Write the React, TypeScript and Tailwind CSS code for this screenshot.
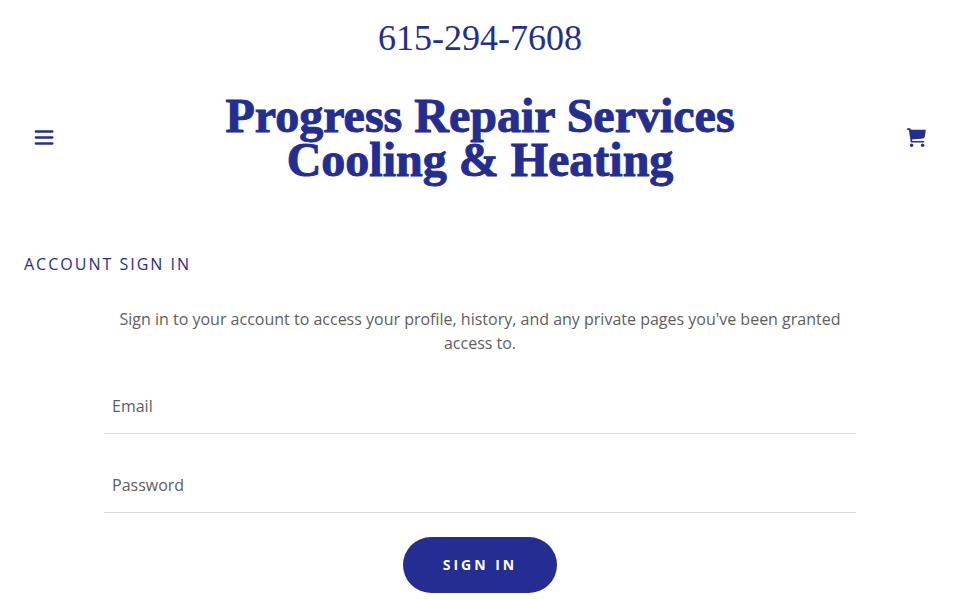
import { useState } from 'react';
import type { FormEvent } from 'react';

const fieldClass =
  'block w-full h-[55px] px-2 border-b border-[#d9d9d9] bg-transparent text-base text-[#5e5e5e] placeholder:text-[#5e5e5e] placeholder:opacity-100 focus:outline-none focus:border-[#242d92]';

function MenuIcon() {
  return (
    <svg
      className="w-6 h-6"
      viewBox="0 0 24 24"
      fill="none"
      stroke="currentColor"
      strokeWidth={2.3}
      strokeLinecap="round"
      aria-hidden="true"
    >
      <path d="M3.8 5.5h16.6M3.8 11.5h16.6M3.8 17.5h16.6" />
    </svg>
  );
}

function CartIcon() {
  return (
    <svg className="w-6 h-6" viewBox="0 0 24 24" fill="currentColor" aria-hidden="true">
      <path d="M3.7 2.2h2c.5 0 .8.3.9.8l.2.8h14c.6 0 1 .5.9 1.1l-.9 5.6c-.2 1-.8 1.7-1.8 1.9L8 13.4l.3 1.5h11.3c.5 0 .8.4.8.8s-.3.9-.8.9H7.6c-.4 0-.8-.3-.9-.7L4.900 3.900H3.700c-.5 0-.8-.4-.8-.9s.3-.8.8-.8z" />
      <circle cx="7.6" cy="19.300" r="1.700" />
      <circle cx="18.600" cy="19.300" r="1.700" />
    </svg>
  );
}

function Header() {
  return (
    <header className="px-6 pt-4 font-['Liberation_Serif',serif]">
      <p className="text-center text-4xl leading-[44px]">
        <a href="tel:615-294-7608">615-294-7608</a>
      </p>
      <div className="mt-[34px] flex items-center justify-between">
        <button type="button" aria-label="Menu" className="p-2">
          <MenuIcon />
        </button>
        <h1 className="max-w-[560px] text-center text-[48px] leading-[44px] font-bold [-webkit-text-stroke:1px_currentColor]">
          <a href="#">Progress Repair Services Cooling &amp; Heating</a>
        </h1>
        <button type="button" aria-label="Shopping cart" className="p-2">
          <CartIcon />
        </button>
      </div>
    </header>
  );
}

function SignInForm() {
  const [email, setEmail] = useState('');
  const [password, setPassword] = useState('');

  const handleSubmit = (e: FormEvent) => {
    e.preventDefault();
  };

  return (
    <form onSubmit={handleSubmit} className="mt-6 flex flex-col gap-6">
      <input
        type="email"
        aria-label="Email"
        placeholder="Email"
        value={email}
        onChange={(e) => setEmail(e.target.value)}
        className={fieldClass}
      />
      <input
        type="password"
        aria-label="Password"
        placeholder="Password"
        value={password}
        onChange={(e) => setPassword(e.target.value)}
        className={fieldClass}
      />
      <button
        type="submit"
        className="self-center h-14 px-10 rounded-full bg-[#242d92] text-sm font-bold uppercase tracking-[3px] text-white hover:bg-[#1b2270]"
      >
        Sign in
      </button>
    </form>
  );
}

export default function App() {
  return (
    <div className="bg-white font-['Open_Sans',sans-serif] text-[#242d92]">
      <Header />
      <main className="px-6 pt-[70px]">
        <h2 className="text-base leading-6 uppercase tracking-[2px]">Account sign in</h2>
        <div className="mt-[31px] px-20">
          <p className="text-center text-base leading-6 text-[#5e5e5e]">
            Sign in to your account to access your profile, history, and any private pages
            you've been granted access to.
          </p>
          <SignInForm />
        </div>
      </main>
    </div>
  );
}
